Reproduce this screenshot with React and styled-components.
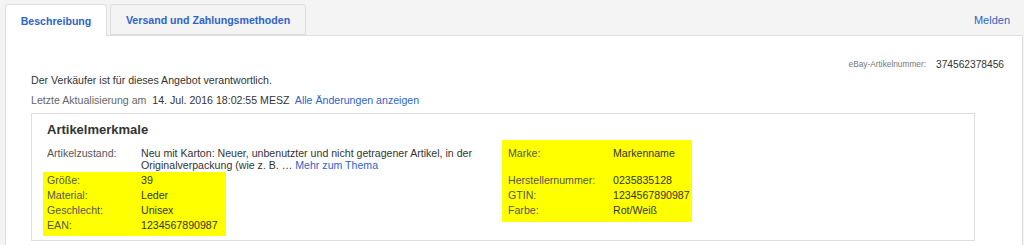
import React from "react"
import styled, { createGlobalStyle } from "styled-components"

const GlobalStyle = createGlobalStyle`
  html, body {
    margin: 0;
    padding: 0;
    background: #f4f4f4;
    font-family: "Liberation Sans", Arial, sans-serif;
    color: #333;
  }
`

const Page = styled.div`
  width: 1024px;
  height: 245px;
  overflow: hidden;
  padding: 4px 0 0 5px;
  box-sizing: border-box;
`

const TabBar = styled.div`
  display: flex;
  align-items: flex-end;
  height: 31px;
  margin-right: 2px;
`

const Tab = styled.div`
  box-sizing: border-box;
  height: ${props => (props.active ? "32px" : "31px")};
  margin-bottom: ${props => (props.active ? "-1px" : "0")};
  width: ${props => props.width}px;
  margin-right: 3px;
  display: flex;
  align-items: center;
  justify-content: center;
  font-size: 10.6px;
  font-weight: bold;
  color: #2e63c8;
  background: ${props => (props.active ? "#fff" : "#f4f4f4")};
  border: 1px solid #dedede;
  border-bottom: ${props => (props.active ? "none" : "1px solid #dedede")};
  border-radius: 3px 3px 0 0;
  position: relative;
  z-index: 1;
`

const Report = styled.a`
  margin-left: auto;
  align-self: center;
  margin-right: 12px;
  font-size: 11px;
  color: #2e63c8;
`

const Panel = styled.div`
  background: #fff;
  border: 1px solid #dedede;
  margin-right: 1px;
  height: 240px;
  box-sizing: border-box;
  padding: 21px 17px 0 25px;
`

const ItemNumber = styled.div`
  display: flex;
  justify-content: flex-end;
  align-items: center;
  gap: 10px;
  height: 14px;
  padding-right: 1px;
  span:first-child {
    font-size: 8.3px;
    color: #777;
  }
  span:last-child {
    font-size: 10.2px;
    color: #333;
  }
`

const Line = styled.div`
  font-size: 10.6px;
  line-height: 20px;
  color: #333;
  margin-top: ${props => props.top || 0}px;
`

const Muted = styled.span`
  color: #666;
`

const Link = styled.a`
  color: #2e63c8;
  text-decoration: none;
`

const Box = styled.div`
  margin-top: 3px;
  width: 944px;
  border: 1px solid #dedede;
  box-sizing: border-box;
  padding: 8px 0 4px 15px;
`

const Title = styled.h2`
  margin: 0 0 2px;
  font-size: 13px;
  font-weight: bold;
  color: #333;
  line-height: 16px;
`

const Columns = styled.div`
  display: grid;
  grid-template-columns: 455px 190px;
  align-items: start;
`

const Highlight = styled.div`
  background: #ffff00;
  margin-left: ${props => props.shiftLeft || 0}px;
  padding: ${props => props.pad};
  width: ${props => props.width}px;
  box-sizing: border-box;
`

const Row = styled.div`
  display: grid;
  grid-template-columns: ${props => props.labelWidth}px 1fr;
  font-size: 10.6px;
  line-height: 15px;
  min-height: ${props => props.minH || 0}px;
`

const Label = styled.div`
  color: #555;
`

const Value = styled.div`
  color: #333;
  max-width: ${props => props.maxW || "none"};
`

const Condition = styled(Row)`
  line-height: 12px;
  margin-top: 7px;
  margin-bottom: 1px;
`

const leftRows = [
  ["Größe:", "39"],
  ["Material:", "Leder"],
  ["Geschlecht:", "Unisex"],
  ["EAN:", "1234567890987"],
]

const rightRows = [
  ["Herstellernummer:", "0235835128"],
  ["GTIN:", "1234567890987"],
  ["Farbe:", "Rot/Weiß"],
]

export default function App() {
  return (
    <Page>
      <GlobalStyle />
      <TabBar>
        <Tab active width={102}>Beschreibung</Tab>
        <Tab width={196}>Versand und Zahlungsmethoden</Tab>
        <Report>Melden</Report>
      </TabBar>
      <Panel>
        <ItemNumber>
          <span>eBay-Artikelnummer:</span>
          <span>374562378456</span>
        </ItemNumber>
        <Line top={-1}>Der Verkäufer ist für dieses Angebot verantwortlich.</Line>
        <Line>
          <Muted>Letzte Aktualisierung am</Muted>&nbsp; 14. Jul. 2016 18:02:55 MESZ&nbsp;{" "}
          <Link>Alle Änderungen anzeigen</Link>
        </Line>
        <Box>
          <Title>Artikelmerkmale</Title>
          <Columns>
            <div>
              <Condition labelWidth={94}>
                <Label>Artikelzustand:</Label>
                <Value maxW="336px">
                  Neu mit Karton: Neuer, unbenutzter und nicht getragener Artikel, in der
                  Originalverpackung (wie z. B. … <Link>Mehr zum Thema</Link>
                </Value>
              </Condition>
              <Highlight shiftLeft={-4} pad="1px 0 3px 4px" width={183}>
                {leftRows.map(([l, v]) => (
                  <Row key={l} labelWidth={94}>
                    <Label>{l}</Label>
                    <Value>{v}</Value>
                  </Row>
                ))}
              </Highlight>
            </div>
            <Highlight pad="6px 0 4px 6px" width={190}>
              <Row labelWidth={105} minH={27}>
                <Label>Marke:</Label>
                <Value>Markenname</Value>
              </Row>
              {rightRows.map(([l, v]) => (
                <Row key={l} labelWidth={105}>
                  <Label>{l}</Label>
                  <Value>{v}</Value>
                </Row>
              ))}
            </Highlight>
          </Columns>
        </Box>
      </Panel>
    </Page>
  )
}
